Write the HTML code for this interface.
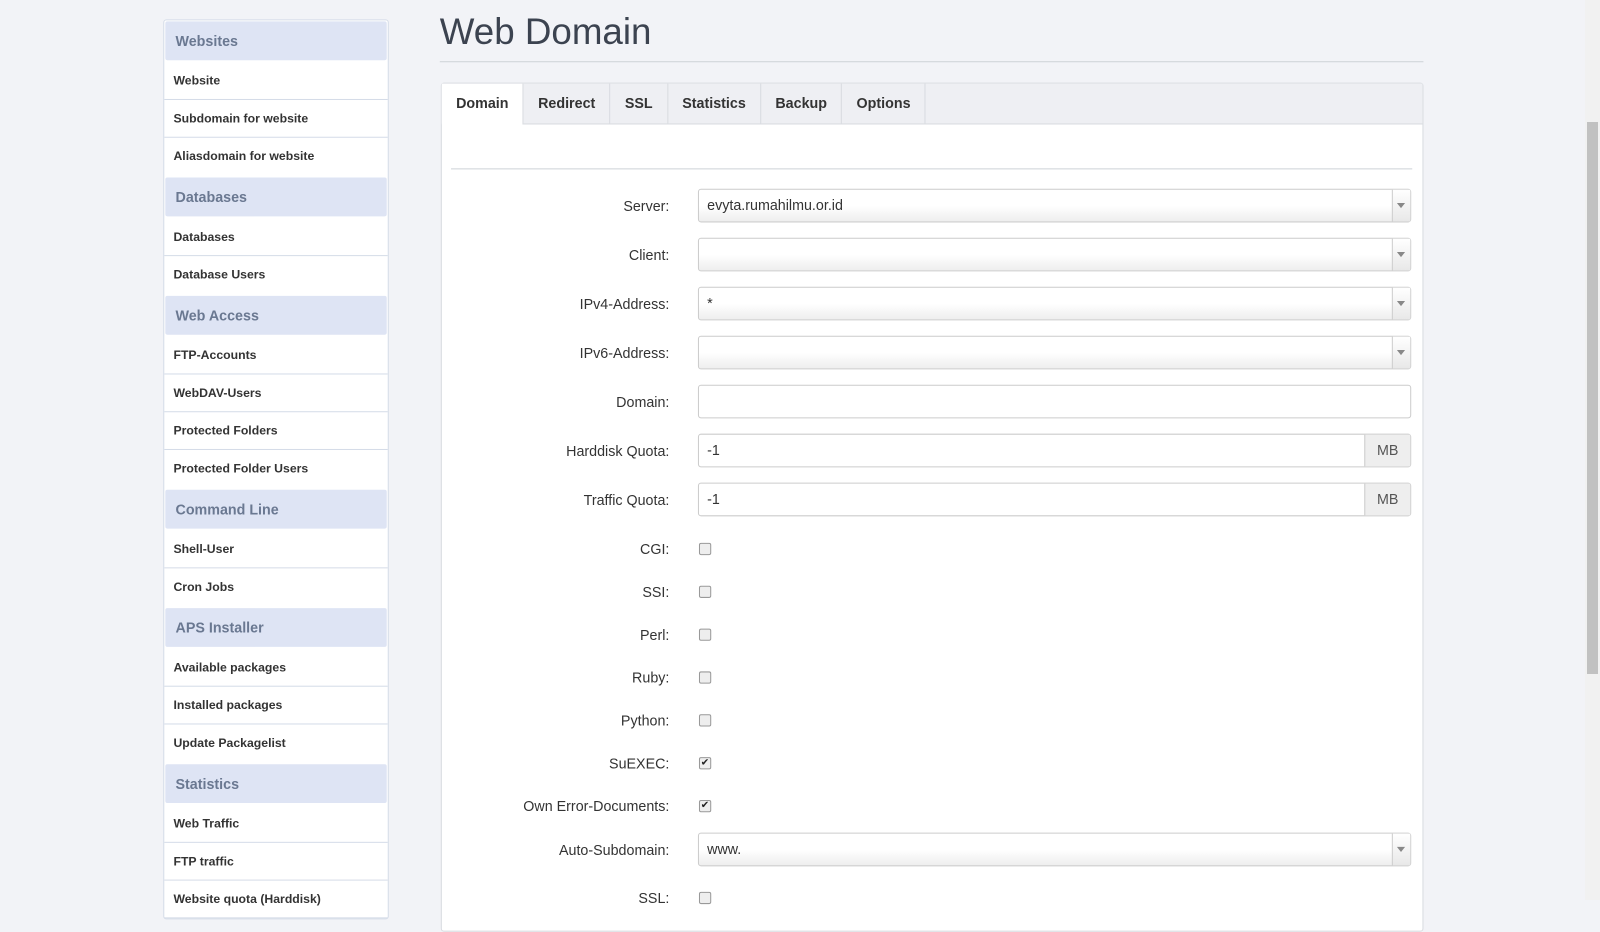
<!DOCTYPE html><html><head><style>
body{margin:0;background:#f2f3f7;font-family:"Liberation Sans",sans-serif;width:1600px;height:900px;overflow:hidden;position:relative}
.wrap{position:absolute;left:0;top:0;width:1568px;height:900px;transform:scale(1.0204);transform-origin:0 0}
.side{position:absolute;left:160px;top:19px;width:219px;border:1px solid #d5dce8;background:#fff;border-radius:3px}
.h{background:#dee4f4;color:#6a7891;font-weight:bold;font-size:14px;height:38px;line-height:38px;padding-left:10px;margin:3px 1px 2px 1px;border-radius:2px}
.h:first-child{margin-top:1px}
.i{font-weight:bold;font-size:12px;color:#333;height:36px;line-height:36px;padding-left:9px;border-bottom:1px solid #d5dce8}
h1{position:absolute;left:431px;top:10px;margin:0;font-weight:normal;font-size:36px;color:#3c4350}
.hr{position:absolute;left:431px;top:60px;width:964px;border-top:1px solid #cfd3d8}
.panel{position:absolute;left:432px;top:81px;width:961px;height:830px;background:#fff;border:1px solid #d8dbe0;border-radius:3px}
.tabs{height:39px;background:#eeeff3;border-bottom:1px solid #d8dbe0;display:flex}
.tab{font-weight:bold;font-size:14px;color:#333;padding:0 14px;line-height:38px;border-right:1px solid #d8dbe0}
.tab.a{background:#fff;height:40px}
.ihr{position:absolute;left:9px;top:83px;width:942px;border-top:1px solid #cfd3d8}
.lab{position:absolute;width:223px;text-align:right;font-size:14px;color:#333;left:0}
.inp{position:absolute;left:251px;height:31px;border:1px solid #ccc;border-radius:3px;background:#fff;font-size:14px;color:#333;line-height:31px;padding-left:8px;box-sizing:content-box;width:689px}
.sel{background:linear-gradient(#fff 50%,#eee)}
.sel:after{content:"";position:absolute;right:0;top:0;width:17px;height:31px;border-left:1px solid #ccc;background:linear-gradient(#fff,#e8e8e8)}
.sel b{position:absolute;right:5px;top:13px;border:4px solid transparent;border-top:5px solid #888;z-index:1}
.mb{position:absolute;right:0;top:0;width:44px;height:31px;background:#eee;border-left:1px solid #ccc;text-align:center;color:#555}
.cb{position:absolute;left:252px;width:10px;height:10px;border:1px solid #999;border-radius:2px;background:#eee;font-size:10px;line-height:10px;text-align:center;color:#222}
.sb{position:absolute;right:0;top:0;width:15px;height:900px;background:#f1f1f1}
.th{position:absolute;left:2px;top:122px;width:11px;height:552px;background:#c1c1c1}
</style></head><body>
<div class="wrap">
<div class="side">
<div class="h">Websites</div><div class="i">Website</div><div class="i">Subdomain for website</div><div class="i" style="border:0">Aliasdomain for website</div>
<div class="h">Databases</div><div class="i">Databases</div><div class="i" style="border:0">Database Users</div>
<div class="h">Web Access</div><div class="i">FTP-Accounts</div><div class="i">WebDAV-Users</div><div class="i">Protected Folders</div><div class="i" style="border:0">Protected Folder Users</div>
<div class="h">Command Line</div><div class="i">Shell-User</div><div class="i" style="border:0">Cron Jobs</div>
<div class="h">APS Installer</div><div class="i">Available packages</div><div class="i">Installed packages</div><div class="i" style="border:0">Update Packagelist</div>
<div class="h">Statistics</div><div class="i">Web Traffic</div><div class="i">FTP traffic</div><div class="i">Website quota (Harddisk)</div>
</div>
<h1>Web Domain</h1><div class="hr"></div>
<div class="panel">
<div class="tabs"><div class="tab a">Domain</div><div class="tab">Redirect</div><div class="tab">SSL</div><div class="tab">Statistics</div><div class="tab">Backup</div><div class="tab">Options</div></div>
<div class="ihr"></div>
<div class="lab" style="top:112px">Server:</div><div class="inp sel" style="top:103px">evyta.rumahilmu.or.id<b></b></div>
<div class="lab" style="top:160px">Client:</div><div class="inp sel" style="top:151px"><b></b></div>
<div class="lab" style="top:208px">IPv4-Address:</div><div class="inp sel" style="top:199px">*<b></b></div>
<div class="lab" style="top:256px">IPv6-Address:</div><div class="inp sel" style="top:247px"><b></b></div>
<div class="lab" style="top:304px">Domain:</div><div class="inp" style="top:295px"></div>
<div class="lab" style="top:352px">Harddisk Quota:</div><div class="inp" style="top:343px">-1<div class="mb">MB</div></div>
<div class="lab" style="top:400px">Traffic Quota:</div><div class="inp" style="top:391px">-1<div class="mb">MB</div></div>
<div class="lab" style="top:448px">CGI:</div><div class="cb" style="top:450px"></div>
<div class="lab" style="top:490px">SSI:</div><div class="cb" style="top:492px"></div>
<div class="lab" style="top:532px">Perl:</div><div class="cb" style="top:534px"></div>
<div class="lab" style="top:574px">Ruby:</div><div class="cb" style="top:576px"></div>
<div class="lab" style="top:616px">Python:</div><div class="cb" style="top:618px"></div>
<div class="lab" style="top:658px">SuEXEC:</div><div class="cb" style="top:660px">✔</div>
<div class="lab" style="top:700px">Own Error-Documents:</div><div class="cb" style="top:702px">✔</div>
<div class="lab" style="top:743px">Auto-Subdomain:</div><div class="inp sel" style="top:734px">www.<b></b></div>
<div class="lab" style="top:790px">SSL:</div><div class="cb" style="top:792px"></div>
</div>
</div>
<div class="sb"><div class="th"></div></div>
</body></html>
